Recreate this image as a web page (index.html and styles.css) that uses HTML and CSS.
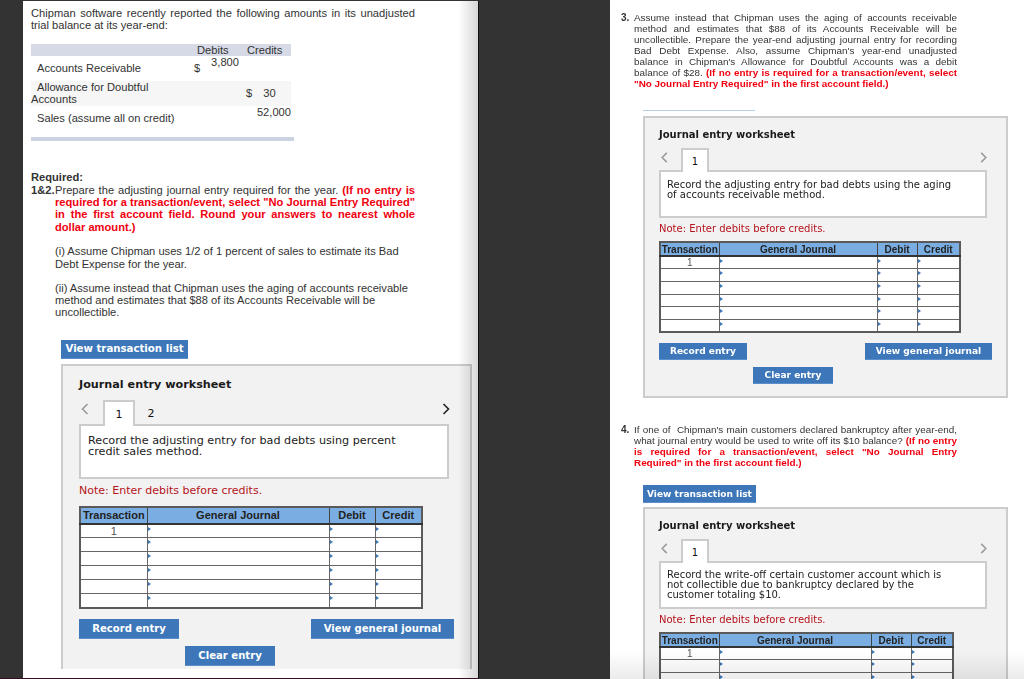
FILE: index.html
```html
<!DOCTYPE html>
<html lang="en">
<head>
<meta charset="utf-8">
<title>Chipman adjusting entries</title>
<link rel="stylesheet" href="styles.css">
</head>
<body>
<main class="desk">
  <section class="page page-left">
    <p class="intro">Chipman software recently reported the following amounts in its unadjusted trial balance at its year-end:</p>
    <div class="tb">
      <div class="tb-row tb-head"><span></span><span class="tb-debit">Debits</span><span class="tb-credit">Credits</span></div>
      <div class="tb-row tb-ar"><span class="tb-label">Accounts Receivable</span><span class="tb-debit"><i>$</i><b>3,800</b></span><span></span></div>
      <div class="tb-row tb-alt"><span class="tb-label tb-wrap">Allowance for Doubtful Accounts</span><span></span><span class="tb-credit tb-thirty"><i>$</i><b>30</b></span></div>
      <div class="tb-row tb-sales"><span class="tb-label">Sales (assume all on credit)</span><span></span><span class="tb-credit tb-top">52,000</span></div>
    </div>
    <div class="tb-foot"></div>
    <div class="required">
      <strong>Required:</strong>
      <div class="hang"><strong class="num">1&amp;2.</strong><p>Prepare the adjusting journal entry required for the year. <em>(If no entry is required for a transaction/event, select "No Journal Entry Required" in the first account field. Round your answers to nearest whole dollar amount.)</em></p></div>
      <p class="sub sub-i">(i) Assume Chipman uses 1/2 of 1 percent of sales to estimate its Bad Debt Expense for the year.</p>
      <p class="sub sub-ii">(ii) Assume instead that Chipman uses the aging of accounts receivable method and estimates that $88 of its Accounts Receivable will be uncollectible.</p>
    </div>
    <div class="wrap-l">
      <button class="btn btn-list">View transaction list</button>
      <div class="sheet sheet-l">
        <h2>Journal entry worksheet</h2>
        <div class="tabs">
          <svg class="chev" viewBox="0 0 10 14"><path d="M8 2 3 7l5 5" stroke="#999"/></svg>
          <span class="tab on">1</span><span class="tab">2</span>
          <svg class="chev next" viewBox="0 0 10 14"><path d="M2 2l5 5-5 5" stroke="#222"/></svg>
        </div>
        <div class="task">Record the adjusting entry for bad debts using percent credit sales method.</div>
        <p class="note">Note: Enter debits before credits.</p>
        <table class="je">
          <thead><tr><th class="c1">Transaction</th><th class="c2">General Journal</th><th class="c3">Debit</th><th class="c4">Credit</th></tr></thead>
          <tbody>
            <tr><td>1</td><td class="m"></td><td class="m"></td><td class="m"></td></tr>
            <tr><td></td><td class="m"></td><td class="m"></td><td class="m"></td></tr>
            <tr><td></td><td class="m"></td><td class="m"></td><td class="m"></td></tr>
            <tr><td></td><td class="m"></td><td class="m"></td><td class="m"></td></tr>
            <tr><td></td><td class="m"></td><td class="m"></td><td class="m"></td></tr>
            <tr><td></td><td class="m"></td><td class="m"></td><td class="m"></td></tr>
          </tbody>
        </table>
        <div class="actions"><button class="btn b-rec">Record entry</button><button class="btn b-view">View general journal</button></div>
        <div class="actions-2"><button class="btn b-clear">Clear entry</button></div>
      </div>
    </div>
  </section>

  <section class="page page-right">
    <div class="q q3"><strong class="qn">3.</strong><p>Assume instead that Chipman uses the aging of accounts receivable method and estimates that $88 of its Accounts Receivable will be uncollectible. Prepare the year-end adjusting journal entry for recording Bad Debt Expense. Also, assume Chipman's year-end unadjusted balance in Chipman's Allowance for Doubtful Accounts was a debit balance of $28. <em>(If no entry is required for a transaction/event, select "No Journal Entry Required" in the first account field.)</em></p></div>
    <div class="wrap-r">
      <div class="rule"></div>
      <div class="sheet sheet-s">
        <h2>Journal entry worksheet</h2>
        <div class="tabs">
          <svg class="chev" viewBox="0 0 10 14"><path d="M8 2 3 7l5 5" stroke="#999"/></svg>
          <span class="tab on">1</span>
          <svg class="chev next" viewBox="0 0 10 14"><path d="M2 2l5 5-5 5" stroke="#999"/></svg>
        </div>
        <div class="task">Record the adjusting entry for bad debts using the aging of accounts receivable method.</div>
        <p class="note">Note: Enter debits before credits.</p>
        <table class="je">
          <thead><tr><th class="c1">Transaction</th><th class="c2">General Journal</th><th class="c3">Debit</th><th class="c4">Credit</th></tr></thead>
          <tbody>
            <tr><td>1</td><td class="m"></td><td class="m"></td><td class="m"></td></tr>
            <tr><td></td><td class="m"></td><td class="m"></td><td class="m"></td></tr>
            <tr><td></td><td class="m"></td><td class="m"></td><td class="m"></td></tr>
            <tr><td></td><td class="m"></td><td class="m"></td><td class="m"></td></tr>
            <tr><td></td><td class="m"></td><td class="m"></td><td class="m"></td></tr>
            <tr><td></td><td class="m"></td><td class="m"></td><td class="m"></td></tr>
          </tbody>
        </table>
        <div class="actions"><button class="btn b-rec">Record entry</button><button class="btn b-view">View general journal</button></div>
        <div class="actions-2"><button class="btn b-clear">Clear entry</button></div>
      </div>
    </div>
    <div class="q q4"><strong class="qn">4.</strong><p>If one of&nbsp; Chipman's main customers declared bankruptcy after year-end, what journal entry would be used to write off its $10 balance? <em>(If no entry is required for a transaction/event, select "No Journal Entry Required" in the first account field.)</em></p></div>
    <div class="wrap-r wrap-r2">
      <button class="btn btn-list">View transaction list</button>
      <div class="sheet sheet-s sheet-s2">
        <h2>Journal entry worksheet</h2>
        <div class="tabs">
          <svg class="chev" viewBox="0 0 10 14"><path d="M8 2 3 7l5 5" stroke="#999"/></svg>
          <span class="tab on">1</span>
          <svg class="chev next" viewBox="0 0 10 14"><path d="M2 2l5 5-5 5" stroke="#999"/></svg>
        </div>
        <div class="task">Record the write-off certain customer account which is not collectible due to bankruptcy declared by the customer totaling $10.</div>
        <p class="note">Note: Enter debits before credits.</p>
        <table class="je">
          <thead><tr><th class="c1">Transaction</th><th class="c2">General Journal</th><th class="c3">Debit</th><th class="c4">Credit</th></tr></thead>
          <tbody>
            <tr><td>1</td><td class="m"></td><td class="m"></td><td class="m"></td></tr>
            <tr><td></td><td class="m"></td><td class="m"></td><td class="m"></td></tr>
            <tr><td></td><td class="m"></td><td class="m"></td><td class="m"></td></tr>
          </tbody>
        </table>
      </div>
    </div>
  </section>
</main>
</body>
</html>
```
FILE: styles.css
```css
* { box-sizing: border-box; }
html, body { margin: 0; height: 679px; overflow: hidden; background: #333; }
body { font-family: "Liberation Sans", Arial, sans-serif; color: #333; }
p { margin: 0; }
em { font-style: normal; font-weight: 700; color: #f0000f; }

.desk { display: flex; height: 679px; padding-left: 23px; filter: blur(.3px); position: relative; }
.desk::after { content: ""; position: absolute; left: 0; bottom: 0; width: 479px; height: 1px; background: #3a0a25; }
.page { background: #fff; position: relative; overflow: hidden; }
.page-left { width: 456px; height: 677px; margin-top: 1px; padding: 6px 0 0 8px; border-right: 1px solid #111; font-size: 11.15px; line-height: 12.35px; }
.page-left::after { content: ""; position: absolute; top: 0; right: 0; bottom: 0; width: 20px; background: linear-gradient(to right, rgba(0,0,0,0), rgba(0,0,0,.16)); pointer-events: none; }
.page-right { width: 414px; height: 679px; margin-left: 131px; padding-top: 12px; font-size: 10px; line-height: 11px; }
.page-right::after { content: ""; position: absolute; left: 0; right: 0; bottom: 0; height: 28px; background: linear-gradient(to bottom, rgba(0,0,0,0), rgba(0,0,0,.08)); pointer-events: none; }

.intro { width: 384px; text-align: justify; }

.tb { width: 260px; margin-top: 12px; }
.tb-row { display: grid; grid-template-columns: 162px 46px 52px; }
.tb-head { height: 12px; background: #d5dae6; line-height: 12px; }
.tb-head .tb-debit { padding-left: 4px; }
.tb-head .tb-credit { padding-left: 8px; }
.tb-ar { height: 25px; }
.tb-alt { height: 25px; background: #f6f6f6; }
.tb-sales { height: 25px; }
.tb-label { padding-left: 6px; align-self: center; }
.tb-wrap { text-indent: 6px; padding-left: 0; }
.tb-debit i, .tb-credit i { font-style: normal; }
.tb-ar .tb-debit { position: relative; }
.tb-ar .tb-debit i { position: absolute; left: 1px; top: 6px; }
.tb-ar .tb-debit b { position: absolute; right: 0; top: 0; font-weight: 400; }
.tb-thirty { display: flex; gap: 11px; padding-left: 7px; align-self: center; }
.tb-thirty b { font-weight: 400; }
.tb-top { text-align: right; }
.tb-foot { width: 263px; height: 4px; margin-top: 6px; background: #ccd3e0; }

.required { width: 384px; margin-top: 30.5px; }
.required strong { display: block; }
.hang { display: flex; }
.hang .num { width: 24px; flex: none; }
.hang p { text-align: justify; }
.sub { margin-left: 24px; }
.sub-i { margin-top: 12.5px; }
.sub-ii { margin-top: 11.5px; }

.wrap-l { margin: 21px 0 0 30px; width: 411px; }
.btn { display: block; border: 0; border-bottom: 1px solid #5b8fcb; background: #3d77b9; color: #fff; font-family: "DejaVu Sans", sans-serif; font-weight: 700; padding: 0; text-align: center; cursor: pointer; white-space: nowrap; }
.wrap-l .btn-list { width: 127px; height: 19px; font-size: 10.2px; line-height: 18px; }

.sheet { background: #f2f2f2; border: 2px solid #ccc; color: #111; font-family: "DejaVu Sans", sans-serif; }
.sheet h2 { margin: 0; font-weight: 700; color: #1a1a1a; }
.tabs { display: flex; position: relative; }
.tab { display: block; text-align: center; }
.tab.on { background: #fff; border: 2px solid #ccc; border-bottom: 0; position: relative; z-index: 1; }
.chev { position: absolute; fill: none; stroke-width: 1.6; }
.chev.next { left: auto; }
.task { background: #fff; border: 2px solid #ccc; color: #222; }
.note { color: #b5121b; }

.je { border-collapse: collapse; table-layout: fixed; border: 2px solid #5a5a5a; background: #fff; }
.je th { background: #7aaee2; color: #222; font-weight: 700; font-family: "Liberation Sans", Arial, sans-serif; padding: 0; border: 1px solid #444; border-bottom: 2px solid #333; text-align: center; }
.je td { position: relative; padding: 0; border: 1px solid #666; text-align: center; color: #555; font-family: "Liberation Sans", Arial, sans-serif; vertical-align: top; }
.je td.m::before { content: ""; position: absolute; left: 0; top: 2px; border-left: 3px solid #3d77b9; border-top: 2px solid transparent; border-bottom: 2px solid transparent; }
.actions { display: flex; justify-content: space-between; }
.actions-2 { display: flex; }

/* large worksheet */
.sheet-l { width: 411px; height: 305px; margin-top: 5px; padding: 11px 16px 0; border-bottom: 0; }
.sheet-l h2 { font-size: 11.2px; line-height: 16px; }
.sheet-l .tabs { height: 25px; margin-top: 7px; margin-bottom: -1px; width: 370px; }
.sheet-l .tab { width: 32px; line-height: 27px; font-size: 11px; }
.sheet-l .tab.on { margin-left: 24px; height: 26px; line-height: 25px; }
.sheet-l .chev { width: 11px; height: 14px; left: 0; top: 2px; }
.sheet-l .chev.next { left: 362px; }
.sheet-l .task { width: 370px; height: 55px; padding: 9px 37px 0 7px; font-size: 11.2px; line-height: 11px; }
.sheet-l .note { margin-top: 5px; font-size: 11px; line-height: 13px; }
.sheet-l .je { width: 342px; margin-top: 9px; font-size: 11px; line-height: 12px; }
.sheet-l .c1 { width: 67px; } .sheet-l .c2 { width: 182px; } .sheet-l .c3 { width: 46px; } .sheet-l .c4 { width: 47px; }
.sheet-l thead tr { height: 17px; }
.sheet-l tbody tr { height: 14px; }
.sheet-l .actions { margin-top: 10px; width: 375px; }
.sheet-l .b-rec { width: 100px; height: 20px; font-size: 10.1px; line-height: 19px; }
.sheet-l .b-view { width: 143px; height: 20px; font-size: 10.1px; line-height: 19px; }
.sheet-l .actions-2 { margin-top: 7px; padding-left: 106px; }
.sheet-l .b-clear { width: 90px; height: 20px; font-size: 10.1px; line-height: 19px; }

/* right column */
.q { display: flex; margin-left: 11px; width: 336px; }
.qn { width: 13px; flex: none; }
.q p { text-align: justify; font-size: 9.9px; }
.wrap-r { margin: 21px 0 0 33px; width: 365px; }
.rule { width: 112px; height: 1px; background: #b9cde6; }
.sheet-s { width: 365px; margin-top: 5px; padding: 10px 14px 0; }
.sheet-s h2 { font-size: 10px; line-height: 14px; }
.sheet-s .tabs { height: 23px; margin-top: 6px; margin-bottom: -1px; width: 328px; }
.sheet-s .tab { width: 28px; line-height: 24px; font-size: 10px; }
.sheet-s .tab.on { margin-left: 22px; height: 24px; line-height: 24px; }
.sheet-s .chev { width: 10px; height: 13px; left: 0; top: 3px; }
.sheet-s .chev.next { left: 320px; }
.sheet-s .task { width: 328px; height: 48px; padding: 8px 31px 0 6px; font-size: 10px; line-height: 10px; }
.sheet-s .note { margin-top: 5px; font-size: 10px; line-height: 12px; }
.sheet-s .je { width: 300px; margin-top: 6px; font-size: 10px; line-height: 11px; }
.sheet-s .c1 { width: 59px; } .sheet-s .c2 { width: 158px; } .sheet-s .c3 { width: 40px; } .sheet-s .c4 { width: 43px; }
.sheet-s thead tr { height: 14px; }
.sheet-s tbody tr { height: 12.7px; }
.sheet-s .actions { margin-top: 10px; width: 333px; }
.sheet-s .b-rec { width: 88px; height: 17px; font-size: 9.05px; line-height: 16px; }
.sheet-s .b-view { width: 127px; height: 17px; font-size: 9.05px; line-height: 16px; }
.sheet-s .actions-2 { margin-top: 7px; padding-left: 94px; padding-bottom: 12px; }
.sheet-s .b-clear { width: 80px; height: 17px; font-size: 9.05px; line-height: 16px; }

.q4 { margin-top: 26px; }
.wrap-r2 { margin-top: 17px; }
.wrap-r2 .btn-list { width: 113px; height: 18px; font-size: 9.05px; line-height: 19px; }
.sheet-s2 { margin-top: 4px; }
.sheet-s2 .task { padding-top: 7px; }
.sheet-s2 .je { width: 293px; }
.sheet-s2 .c1 { width: 59px; } .sheet-s2 .c2 { width: 152px; } .sheet-s2 .c3 { width: 40px; } .sheet-s2 .c4 { width: 42px; }
```
